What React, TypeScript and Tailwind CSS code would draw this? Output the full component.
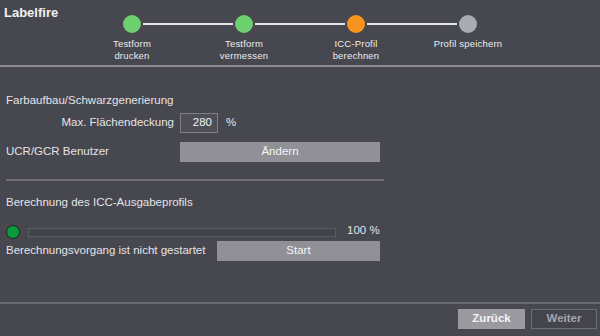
const STEPS = [
  { label: ['Testform', 'drucken'], color: 'bg-[#6dcf6d]' },
  { label: ['Testform', 'vermessen'], color: 'bg-[#6dcf6d]' },
  { label: ['ICC-Profil', 'berechnen'], color: 'bg-[#f7941d]' },
  { label: ['Profil speichern'], color: 'bg-[#a9abb3]' },
];

function Stepper() {
  return (
    <div className="flex flex-col">
      <div className="flex items-center pl-[47px] pt-[15px]">
        {STEPS.map((s, i) => (
          <div key={i} className="flex items-center">
            <div className={`w-[18px] h-[18px] rounded-full ${s.color}`} />
            {i < STEPS.length - 1 && <div className="w-[90px] h-[2px] mx-[2px] bg-[#e8e8ea]" />}
          </div>
        ))}
      </div>
      <div className="flex mt-[5px]">
        {STEPS.map((s, i) => (
          <div key={i} className="w-[112px] text-center text-[9.5px] leading-[12px] tracking-[0.2px] text-[#ececee]">
            {s.label.map((l) => (
              <div key={l}>{l}</div>
            ))}
          </div>
        ))}
      </div>
    </div>
  );
}

export default function App() {
  return (
    <div
      className="w-[600px] h-[336px] bg-[#47474f] text-[#e4e4e8] flex flex-col overflow-hidden"
      style={{ fontFamily: '"Liberation Sans", Arial, sans-serif' }}
    >
      <header className="h-[67px] flex border-b-2 border-[#8a8a90]">
        <div className="w-[76px] pl-[4px] pt-[3px] text-[13px] font-bold text-[#f0f0f2]">Labelfire</div>
        <Stepper />
      </header>

      <main className="flex-1 flex flex-col pl-[6px] text-[11.5px]">
        <div className="mt-[26px] leading-[14px]">Farbaufbau/Schwarzgenerierung</div>

        <div className="flex items-center mt-[6px] h-[20px]">
          <div className="w-[168px] text-right">Max. Flächendeckung</div>
          <div className="ml-[6px] w-[38px] h-[20px] border border-[#7e7e84] bg-[#4e4e56] flex items-center justify-end pr-[5px] text-[#f4f4f6]">
            280
          </div>
          <div className="ml-[8px]">%</div>
        </div>

        <div className="flex items-center mt-[9px] h-[20px]">
          <div className="w-[174px]">UCR/GCR Benutzer</div>
          <button type="button" className="w-[200px] h-[20px] bg-[#909096] text-[#f4f4f6] text-[11.5px]">
            Ändern
          </button>
        </div>

        <div className="mt-[17px] w-[378px] h-[2px] bg-[#6e6e74]" />

        <div className="mt-[14px] leading-[14px]">Berechnung des ICC-Ausgabeprofils</div>

        <div className="flex items-center mt-[16px] h-[14px]">
          <div className="w-[14px] h-[14px] rounded-full bg-[#0b9a3c] border border-[#1c2a20]" />
          <div className="ml-[8px] w-[308px] h-[9px] border border-[#5c5c64] bg-[#43434b]" />
          <div className="ml-[11px] -mt-[3px]">100 %</div>
        </div>

        <div className="flex items-center mt-[2px] h-[20px]">
          <div className="w-[211px]">Berechnungsvorgang ist nicht gestartet</div>
          <button type="button" className="w-[163px] h-[20px] bg-[#909096] text-[#f4f4f6] text-[11.5px]">
            Start
          </button>
        </div>
      </main>

      <footer className="h-[34px] border-t-2 border-[#6a6a72] flex items-start justify-end pt-[5px] pr-[3px] gap-[6px] text-[11.5px] font-bold">
        <button type="button" className="w-[67px] h-[20px] bg-[#9a9aa0] text-[#f4f4f6]">
          Zurück
        </button>
        <button type="button" className="w-[66px] h-[20px] border border-[#6e6e76] bg-[#44444c] text-[#a4a4ac]">
          Weiter
        </button>
      </footer>
    </div>
  );
}
